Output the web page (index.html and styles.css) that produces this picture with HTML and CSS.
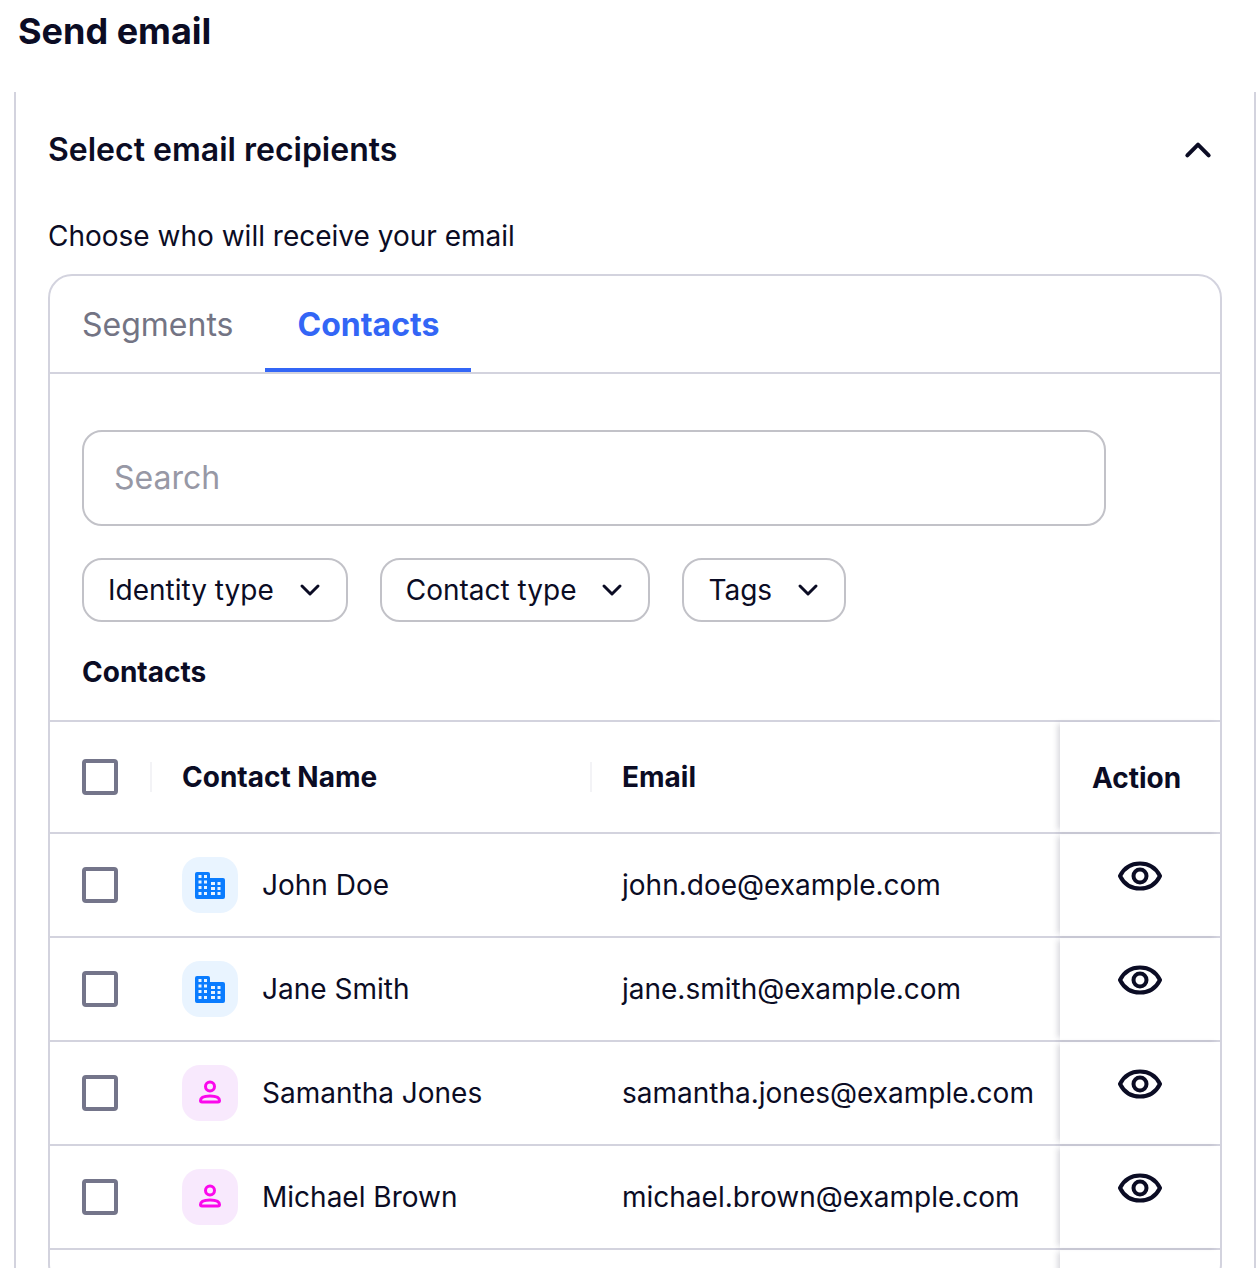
FILE: index.html
```html
<!DOCTYPE html>
<html>
  <head>
    <title>Send email</title>
    <link rel="stylesheet" href="styles.css">
  </head>
  <body>
    <svg class="sprites" width="0" height="0">
      <symbol id="icon-company" viewBox="0 0 56 56">
        <path d="M15 15h11a2 2 0 0 1 2 2v4h13a2 2 0 0 1 2 2v17a2 2 0 0 1-2 2H15a2 2 0 0 1-2-2V17a2 2 0 0 1 2-2z" fill="#0a7cff" />
        <g fill="#e9f4ff">
          <rect x="16.500" y="18" width="3" height="3" /><rect x="22" y="18" width="3" height="3" />
          <rect x="16.500" y="23.500" width="3" height="3" /><rect x="22" y="23.500" width="3" height="3" />
          <rect x="16.500" y="29" width="3" height="3" /><rect x="22" y="29" width="3" height="3" />
          <rect x="16.500" y="35" width="3" height="3" /><rect x="22" y="35" width="3" height="3" />
          <rect x="29" y="25" width="4" height="3" /><rect x="35.500" y="25" width="3" height="3" />
          <rect x="29" y="30" width="4" height="3" /><rect x="35.500" y="30" width="3" height="3" />
          <rect x="29" y="35" width="4" height="3" /><rect x="35.500" y="35" width="3" height="3" />
        </g>
      </symbol>
      <symbol id="icon-person" viewBox="0 0 56 56">
        <g fill="none" stroke="#fb08ec" stroke-width="3">
          <circle cx="28" cy="21.500" r="4.500" />
          <path d="M18.500 35.500c0-2.800 4-4.500 9.500-4.500s9.500 1.700 9.500 4.500c0 .9-.5 1.500-1.500 1.500H20c-1 0-1.500-.6-1.500-1.500z" />
        </g>
      </symbol>
      <symbol id="icon-eye" viewBox="0 0 44 30">
        <g fill="none" stroke="#0b0c24" stroke-width="4">
          <path d="M2 15C6 7 13 2.500 22 2.500S38 7 42 15c-4 8-11 12.500-20 12.500S6 23 2 15z" stroke-linejoin="round" />
          <circle cx="22" cy="15" r="6.500" />
        </g>
      </symbol>
      <symbol id="icon-chevron" viewBox="0 0 24 24">
        <path d="M4 8l8 8 8-8" fill="none" stroke="#0b0c24" stroke-width="3" stroke-linecap="round" stroke-linejoin="round" />
      </symbol>
    </svg>

    <div class="page">
      <h1>Send email</h1>

      <div class="panel">
        <div class="panel-head">
          <h2>Select email recipients</h2>
          <svg class="collapse-icon"><use href="#icon-chevron" /></svg>
        </div>
        <p class="hint">Choose who will receive your email</p>

        <div class="card">
          <div class="tabs">
            <div class="tab">Segments</div>
            <div class="tab active">Contacts</div>
          </div>

          <div class="filters">
            <input class="search" placeholder="Search" />
            <div class="chips">
              <div class="chip">Identity type <svg><use href="#icon-chevron" /></svg></div>
              <div class="chip">Contact type <svg><use href="#icon-chevron" /></svg></div>
              <div class="chip">Tags <svg><use href="#icon-chevron" /></svg></div>
            </div>
            <h3>Contacts</h3>
          </div>

          <div class="table">
            <div class="row head">
              <div class="cell check"><span class="checkbox"></span></div>
              <div class="cell name">Contact Name</div>
              <div class="cell email">Email</div>
              <div class="cell action">Action</div>
            </div>

            <div class="row">
              <div class="cell check"><span class="checkbox"></span></div>
              <div class="cell name">
                <span class="avatar company"><svg><use href="#icon-company" /></svg></span>
                John Doe
              </div>
              <div class="cell email">john.doe@example.com</div>
              <div class="cell action"><svg class="eye"><use href="#icon-eye" /></svg></div>
            </div>

            <div class="row">
              <div class="cell check"><span class="checkbox"></span></div>
              <div class="cell name">
                <span class="avatar company"><svg><use href="#icon-company" /></svg></span>
                Jane Smith
              </div>
              <div class="cell email">jane.smith@example.com</div>
              <div class="cell action"><svg class="eye"><use href="#icon-eye" /></svg></div>
            </div>

            <div class="row">
              <div class="cell check"><span class="checkbox"></span></div>
              <div class="cell name">
                <span class="avatar person"><svg><use href="#icon-person" /></svg></span>
                Samantha Jones
              </div>
              <div class="cell email">samantha.jones@example.com</div>
              <div class="cell action"><svg class="eye"><use href="#icon-eye" /></svg></div>
            </div>

            <div class="row">
              <div class="cell check"><span class="checkbox"></span></div>
              <div class="cell name">
                <span class="avatar person"><svg><use href="#icon-person" /></svg></span>
                Michael Brown
              </div>
              <div class="cell email">michael.brown@example.com</div>
              <div class="cell action"><svg class="eye"><use href="#icon-eye" /></svg></div>
            </div>

            <div class="row tail">
              <div class="cell check"></div>
              <div class="cell name"></div>
              <div class="cell email"></div>
              <div class="cell action"></div>
            </div>
          </div>
        </div>
      </div>
    </div>
  </body>
</html>
```

FILE: styles.css
```css
:root {
  --ink: #0b0c24;
  --line: #d3d3de;
  --control: #c2c2c8;
  --blue: #3366f6;
}

* {
  margin: 0;
  padding: 0;
  box-sizing: border-box;
}
body {
  background: #fff;
  color: var(--ink);
  font-family: Inter, "Noto Sans", sans-serif;
}
.sprites {
  display: block;
  height: 0;
}
.page {
  height: 1268px;
  overflow: hidden;
}
h1 {
  padding: 9px 18px 0;
  height: 92px;
  font-size: 36px;
  line-height: 44px;
  font-weight: 700;
}

.panel {
  margin-left: 14px;
  width: 1242px;
  height: 1196px;
  padding: 0 32px;
  border-left: 2px solid var(--line);
  border-right: 2px solid var(--line);
}
.panel-head {
  display: flex;
  align-items: center;
  justify-content: space-between;
  height: 116px;
  h2 {
    font-size: 32px;
    line-height: 40px;
    font-weight: 600;
  }
  .collapse-icon {
    width: 32px;
    height: 32px;
    margin-right: 8px;
    transform: rotate(180deg);
  }
}
.hint {
  margin-top: 8px;
  font-size: 28px;
  line-height: 40px;
}

.card {
  margin-top: 18px;
  border: 2px solid var(--line);
  border-radius: 24px;
  height: 1014px;
}
.tabs {
  display: flex;
  height: 98px;
  border-bottom: 2px solid var(--line);
  .tab {
    padding: 0 32px;
    font-size: 32px;
    line-height: 98px;
    color: #737484;
    height: 96px;
  }
  .active {
    color: var(--blue);
    font-weight: 700;
    border-bottom: 4px solid var(--blue);
  }
}

.filters {
  padding: 56px 32px 0;
  height: 346px;
  .search {
    display: block;
    width: 1024px;
    height: 96px;
    padding: 0 30px 2px;
    border: 2px solid var(--control);
    border-radius: 20px;
    font-family: inherit;
    font-size: 32px;
    outline: none;
    &::placeholder {
      color: #9798a5;
    }
  }
  .chips {
    display: flex;
    gap: 32px;
    margin-top: 32px;
  }
  .chip {
    display: flex;
    align-items: center;
    gap: 24px;
    height: 64px;
    padding: 0 24px;
    border: 2px solid var(--control);
    border-radius: 20px;
    font-size: 28px;
    svg {
      width: 24px;
      height: 24px;
    }
  }
  h3 {
    margin-top: 30px;
    font-size: 28px;
    line-height: 40px;
    font-weight: 700;
  }
}

.table {
  .row {
    display: grid;
    grid-template-columns: 100px 440px 470px 160px;
    height: 104px;
    border-bottom: 2px solid var(--line);
    font-size: 28px;
  }
  .head {
    height: 114px;
    border-top: 2px solid var(--line);
    font-weight: 700;
    .name,
    .email {
      position: relative;
      &::before {
        content: "";
        position: absolute;
        left: 0;
        top: 40px;
        width: 2px;
        height: 30px;
        background: #f3f3f6;
      }
    }
    .action {
      padding-top: 2px;
    }
  }
  .tail {
    height: 14px;
    border-bottom: none;
  }
  .cell {
    display: flex;
    align-items: center;
  }
  .check {
    padding-left: 32px;
  }
  .name {
    padding-left: 32px;
    gap: 24px;
  }
  .email {
    padding-left: 32px;
    white-space: nowrap;
  }
  .action {
    padding-left: 32px;
    box-shadow: -4px 0 6px -2px rgba(40, 40, 70, 0.2);
  }
  .row:not(.head) .action {
    align-items: flex-start;
    padding: 27px 0 0 58px;
  }
}

.checkbox {
  width: 36px;
  height: 36px;
  border: 4px solid #74758a;
  border-radius: 4px;
}
.avatar {
  width: 56px;
  height: 56px;
  border-radius: 18px;
  svg {
    display: block;
    width: 56px;
    height: 56px;
  }
}
.company {
  background: #e9f4ff;
}
.person {
  background: #f8e9fd;
}
.eye {
  width: 44px;
  height: 30px;
}
```
